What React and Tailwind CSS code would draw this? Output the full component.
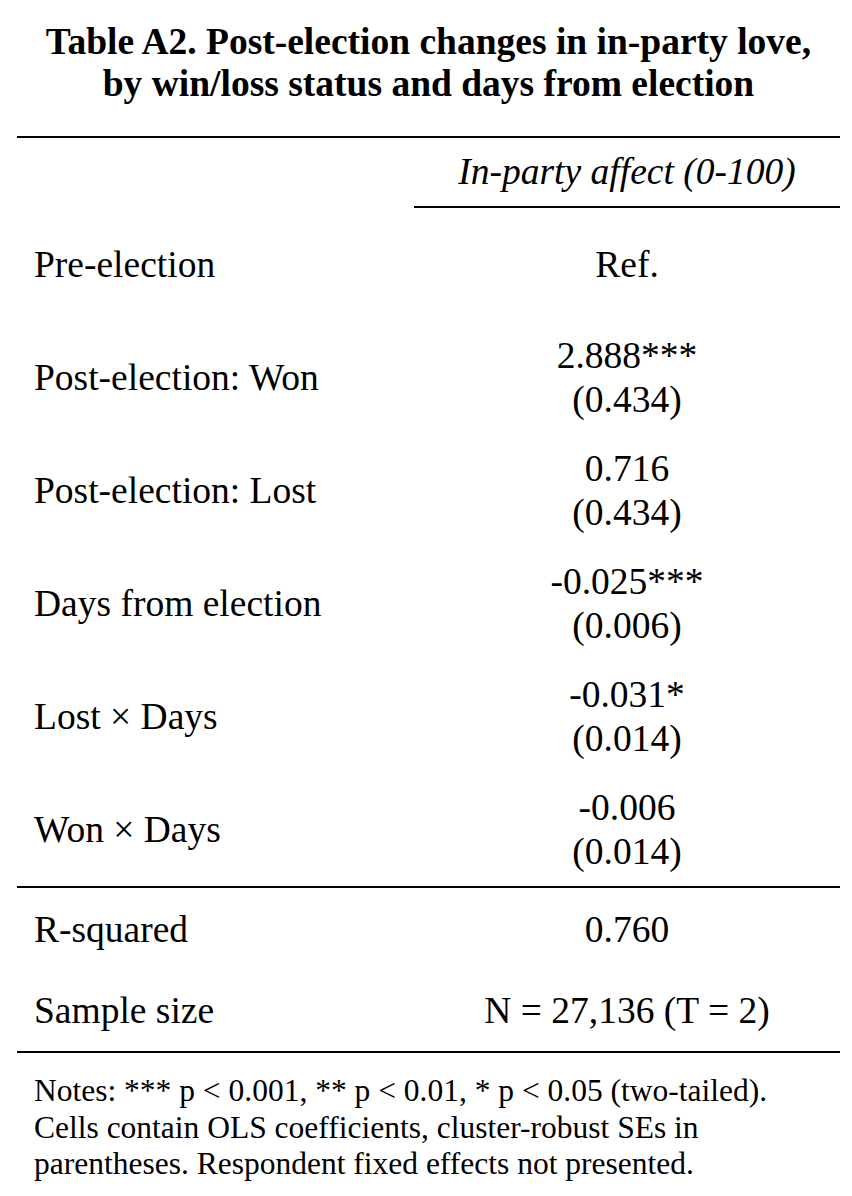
export default function App() {
  const rows = [
    ["Post-election: Won", "2.888***", "(0.434)"],
    ["Post-election: Lost", "0.716", "(0.434)"],
    ["Days from election", "-0.025***", "(0.006)"],
    ["Lost × Days", "-0.031*", "(0.014)"],
    ["Won × Days", "-0.006", "(0.014)"],
  ];
  return (
    <div
      className="w-[852px] h-[1196px] bg-white text-black overflow-hidden"
      style={{ fontFamily: '"Liberation Serif", "Times New Roman", serif' }}
    >
      <div className="ml-[17px] w-[823px] flex flex-col">
        <h1 className="pt-[21px] text-center font-bold text-[37.5px] leading-[42px]">
          Table A2. Post-election changes in in-party love,
          <br />
          by win/loss status and days from election
        </h1>

        <div className="mt-[31px] h-[2px] bg-black" />

        <div className="grid grid-cols-[397px_426px]">
          <div />
          <div className="flex flex-col">
            <div className="pt-[12px] pb-[12px] text-center italic text-[37.5px] leading-[44px]">
              In-party affect (0-100)
            </div>
            <div className="h-[2px] bg-black" />
          </div>
        </div>

        <div className="pt-[13px] pb-[12px] flex flex-col gap-[25px] text-[37.5px] leading-[44px]">
          <div className="grid grid-cols-[397px_426px] h-[88px] items-center">
            <div className="pl-[17px]">Pre-election</div>
            <div className="text-center">Ref.</div>
          </div>
          {rows.map(([label, coef, se]) => (
            <div key={label} className="grid grid-cols-[397px_426px] h-[88px] items-center">
              <div className="pl-[17px]">{label}</div>
              <div className="flex flex-col items-center">
                <span>{coef}</span>
                <span>{se}</span>
              </div>
            </div>
          ))}
        </div>

        <div className="h-[2px] bg-black" />

        <div className="pt-[20px] pb-[18px] flex flex-col gap-[37px] text-[37.5px] leading-[44px]">
          <div className="grid grid-cols-[397px_426px]">
            <div className="pl-[17px]">R-squared</div>
            <div className="text-center">0.760</div>
          </div>
          <div className="grid grid-cols-[397px_426px]">
            <div className="pl-[17px]">Sample size</div>
            <div className="text-center">N = 27,136 (T = 2)</div>
          </div>
        </div>

        <div className="h-[2px] bg-black" />

        <div className="pt-[20px] pl-[17px] text-[31.5px] leading-[36.5px]">
          <p>Notes: *** p &lt; 0.001, ** p &lt; 0.01, * p &lt; 0.05 (two-tailed).</p>
          <p>Cells contain OLS coefficients, cluster-robust SEs in</p>
          <p>parentheses. Respondent fixed effects not presented.</p>
        </div>
      </div>
    </div>
  );
}
